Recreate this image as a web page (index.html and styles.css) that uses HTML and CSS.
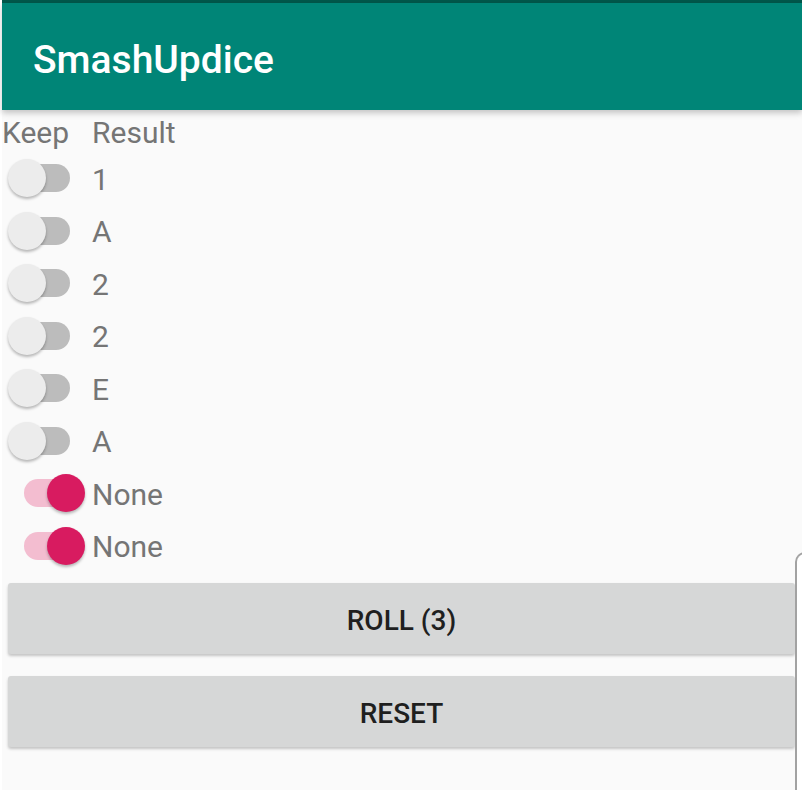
FILE: index.html
```html
<!DOCTYPE html>
<html lang="en">

<head>
    <meta charset="UTF-8">
    <meta name="viewport" content="width=device-width, initial-scale=1.0">
    <title>SmashUpdice</title>
    <link rel="stylesheet" href="styles.css">
</head>

<body>
    <div class="status-bar"></div>
    <div class="app">
        <header class="app-bar">
            <h1>SmashUpdice</h1>
        </header>

        <div class="dice-table">
            <div class="row head">
                <div class="keep">Keep</div>
                <div class="result">Result</div>
            </div>
            <div class="row">
                <div class="keep"><span class="switch"><span class="track"></span><span class="thumb"></span></span></div>
                <div class="result">1</div>
            </div>
            <div class="row">
                <div class="keep"><span class="switch"><span class="track"></span><span class="thumb"></span></span></div>
                <div class="result">A</div>
            </div>
            <div class="row">
                <div class="keep"><span class="switch"><span class="track"></span><span class="thumb"></span></span></div>
                <div class="result">2</div>
            </div>
            <div class="row">
                <div class="keep"><span class="switch"><span class="track"></span><span class="thumb"></span></span></div>
                <div class="result">2</div>
            </div>
            <div class="row">
                <div class="keep"><span class="switch"><span class="track"></span><span class="thumb"></span></span></div>
                <div class="result">E</div>
            </div>
            <div class="row">
                <div class="keep"><span class="switch"><span class="track"></span><span class="thumb"></span></span></div>
                <div class="result">A</div>
            </div>
            <div class="row">
                <div class="keep"><span class="switch on"><span class="track"></span><span class="thumb"></span></span></div>
                <div class="result">None</div>
            </div>
            <div class="row">
                <div class="keep"><span class="switch on"><span class="track"></span><span class="thumb"></span></span></div>
                <div class="result">None</div>
            </div>
        </div>

        <div class="actions">
            <button>ROLL (3)</button>
            <button>RESET</button>
        </div>

        <div class="edge-panel"></div>
    </div>
</body>

</html>
```

FILE: styles.css
```css
body {
    margin: 0;
    background: #fff;
    font-family: Roboto, "Noto Sans", Arial, sans-serif;
    overflow: hidden;
}

.status-bar {
    height: 3px;
    margin-left: 2px;
    background: #00574b;
}

.app {
    position: relative;
    margin-left: 2px;
    height: 787px;
    background: #fafafa;
}

.app-bar {
    position: relative;
    height: 107px;
    background: #008577;
    display: flex;
    align-items: center;
    padding-left: 31px;
    box-shadow: 0 3px 6px rgba(0, 0, 0, 0.22);
}

.app-bar h1 {
    margin: 0;
    color: #fff;
    font-size: 39px;
    font-weight: 500;
    padding-top: 6px;
}

.dice-table {
    color: #757575;
    font-size: 30px;
}

.row {
    display: flex;
    align-items: center;
    height: 52.5px;
}

.row.head {
    height: 42px;
}

.keep {
    width: 90px;
    height: 100%;
    display: flex;
    align-items: center;
}

.result {
    line-height: 1;
    padding-top: 3px;
}

.head .keep {
    padding-top: 3px;
}

.switch {
    position: relative;
    display: block;
    width: 89px;
    height: 40px;
}

.track {
    position: absolute;
    left: 22px;
    top: 6px;
    width: 46px;
    height: 28px;
    border-radius: 14px;
    background: #bcbcbc;
}

.thumb {
    position: absolute;
    left: 6px;
    top: 1px;
    width: 38px;
    height: 38px;
    border-radius: 50%;
    background: #ececec;
    box-shadow: 0 2px 3px rgba(0, 0, 0, 0.28);
}

.switch.on .track {
    background: #f3bdd0;
}

.switch.on .thumb {
    left: 45px;
    background: #d81b60;
}

.actions {
    display: flex;
    flex-direction: column;
    gap: 22px;
    padding: 11px 7px 0 6px;
}

button {
    height: 71px;
    padding-top: 5px;
    border: none;
    border-radius: 3px;
    background: #d6d7d7;
    color: #1f1f1f;
    font-family: Roboto, "Noto Sans", Arial, sans-serif;
    font-size: 28px;
    font-weight: 500;
    box-shadow: 0 2px 3px rgba(0, 0, 0, 0.22);
}

.edge-panel {
    position: absolute;
    left: 793px;
    top: 549px;
    width: 20px;
    height: 260px;
    background: #fff;
    border-left: 2px solid #a2a2a2;
    border-top: 2px solid #a2a2a2;
    border-top-left-radius: 10px;
}
```
